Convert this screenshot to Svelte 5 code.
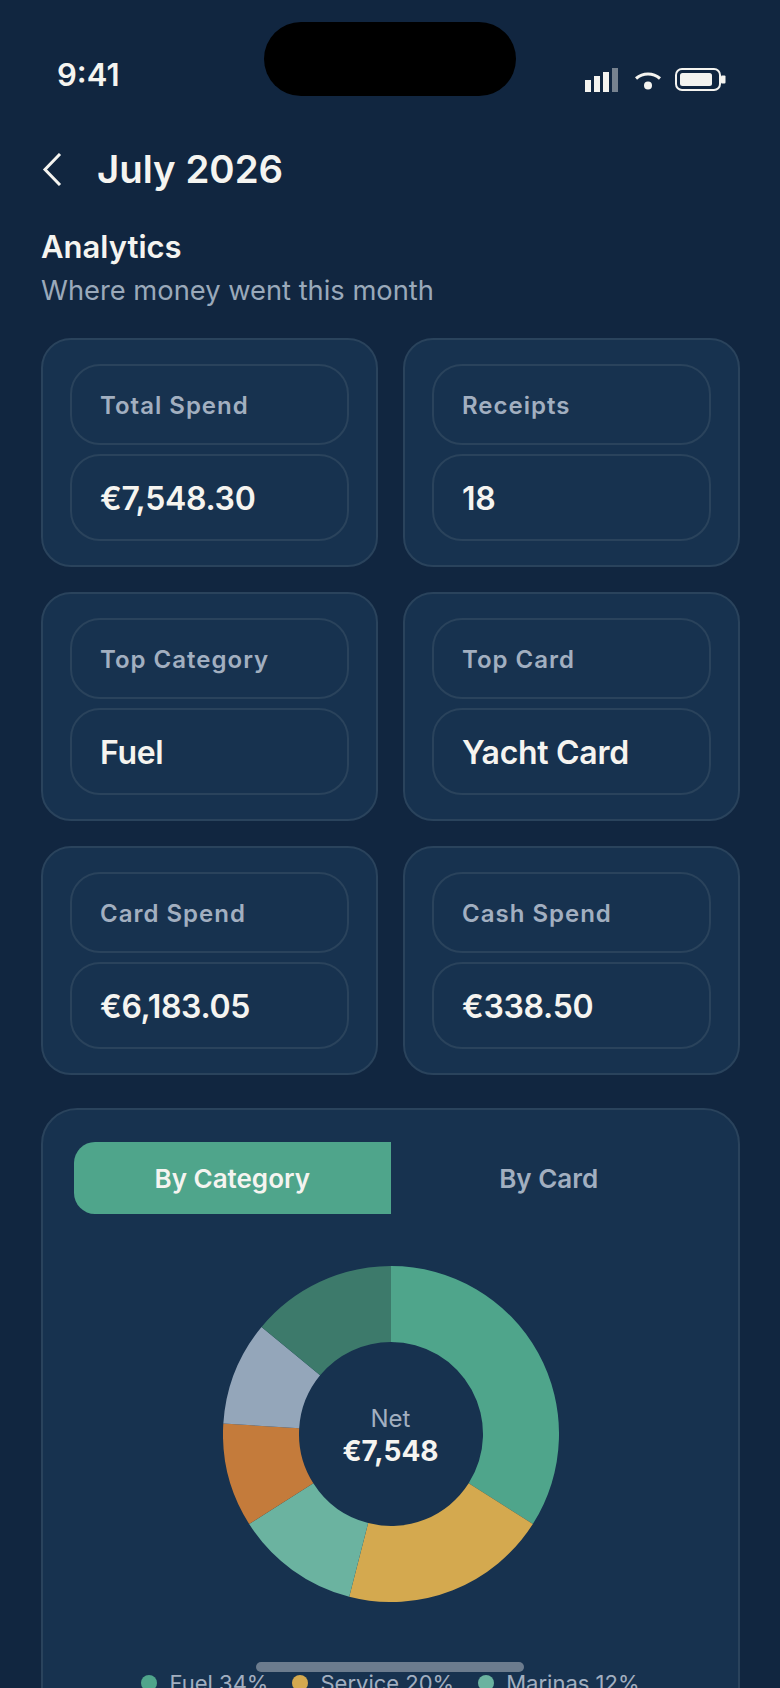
<script lang="ts">
	const stats = [
		{ label: 'Total Spend', value: '€7,548.30' },
		{ label: 'Receipts', value: '18' },
		{ label: 'Top Category', value: 'Fuel' },
		{ label: 'Top Card', value: 'Yacht Card' },
		{ label: 'Card Spend', value: '€6,183.05' },
		{ label: 'Cash Spend', value: '€338.50' }
	];

	const slices = [
		{ name: 'Fuel', pct: 34, color: '#4fa58b', legend: true },
		{ name: 'Service', pct: 20, color: '#d4a94f', legend: true },
		{ name: 'Marinas', pct: 12, color: '#6bb3a0', legend: true },
		{ name: 'Repairs', pct: 10, color: '#c47b3b', legend: false },
		{ name: 'Supplies', pct: 10, color: '#94a6ba', legend: false },
		{ name: 'Other', pct: 14, color: '#3d7a6b', legend: false }
	];

	const R = 168;
	const r = 92;

	function point(radius: number, pct: number) {
		const a = (pct / 100) * Math.PI * 2;
		return `${(R + radius * Math.sin(a)).toFixed(2)} ${(R - radius * Math.cos(a)).toFixed(2)}`;
	}

	let start = 0;
	const arcs = slices.map((s) => {
		const end = start + s.pct;
		const large = s.pct > 50 ? 1 : 0;
		const d = `M${point(R, start)} A${R} ${R} 0 ${large} 1 ${point(R, end)} L${point(r, end)} A${r} ${r} 0 ${large} 0 ${point(r, start)} Z`;
		start = end;
		return { d, color: s.color };
	});
</script>

<div class="screen">
	<div class="island"></div>

	<div class="status">
		<span class="time">9:41</span>
		<div class="status-icons">
			<svg width="34" height="24" viewBox="0 0 34 24" class="signal">
				<rect x="0" y="12" width="6" height="12" fill="#f5f4f0" />
				<rect x="9" y="8" width="6" height="16" fill="#f5f4f0" />
				<rect x="18" y="4" width="6" height="20" fill="#f5f4f0" />
				<rect x="27" y="0" width="6" height="24" fill="#f5f4f0" opacity="0.45" />
			</svg>
			<svg width="26" height="20" viewBox="0 0 26 20" class="wifi">
				<path d="M1 7.5 C8 1.5 18 1.5 25 7.5" fill="none" stroke="#f5f4f0" stroke-width="3.2" />
				<circle cx="13" cy="14.5" r="4" fill="#f5f4f0" />
			</svg>
			<svg width="51" height="23" viewBox="0 0 51 23" class="battery">
				<rect x="1" y="1" width="44" height="21" rx="6" fill="none" stroke="#f5f4f0" stroke-width="2" />
				<rect x="5" y="5" width="32" height="13" rx="2.5" fill="#f5f4f0" />
				<rect x="46" y="7.5" width="4.5" height="8" rx="1" fill="#f5f4f0" />
			</svg>
		</div>
	</div>

	<main class="content">
		<header class="top">
			<svg width="20" height="33" viewBox="0 0 20 33" class="back">
				<path d="M18 1 L3 16.5 L18 32" fill="none" stroke="#f5f4f0" stroke-width="3" />
			</svg>
			<h1>July 2026</h1>
		</header>

		<h2>Analytics</h2>
		<p class="sub">Where money went this month</p>

		<section class="grid">
			{#each stats as s}
				<div class="card">
					<div class="pill label">{s.label}</div>
					<div class="pill value">{s.value}</div>
				</div>
			{/each}
		</section>

		<section class="panel">
			<div class="tabs">
				<button class="tab active">By Category</button>
				<button class="tab">By Card</button>
			</div>

			<div class="donut">
				<svg width="336" height="336" viewBox="0 0 336 336">
					{#each arcs as a}
						<path d={a.d} fill={a.color} />
					{/each}
				</svg>
				<div class="center">
					<span class="net">Net</span>
					<strong>€7,548</strong>
				</div>
			</div>

			<div class="legend">
				{#each slices.filter((s) => s.legend) as s}
					<span class="item">
						<i style="background: {s.color}"></i>
						{s.name} {s.pct}%
					</span>
				{/each}
			</div>
		</section>
	</main>

	<div class="home"></div>
</div>

<style>
	:global(body) {
		margin: 0;
		background: #112640;
	}

	.screen {
		position: relative;
		width: 780px;
		height: 1688px;
		overflow: hidden;
		background: #112640;
		color: #f5f4f0;
		font-family: Inter, 'Liberation Sans', sans-serif;
	}

	.island {
		position: absolute;
		top: 22px;
		left: 264px;
		width: 252px;
		height: 74px;
		border-radius: 37px;
		background: #000;
	}

	.status {
		display: flex;
		justify-content: space-between;
		align-items: flex-start;
		height: 134px;
		padding: 0 54px 0 57px;
		box-sizing: border-box;
	}

	.time {
		margin-top: 57px;
		font-size: 31px;
		line-height: 36px;
		font-weight: 600;
	}

	.status-icons {
		display: flex;
		align-items: flex-start;
		margin-top: 68px;
	}

	.signal {
		margin-right: 16px;
	}

	.wifi {
		margin-right: 14px;
		margin-top: 3px;
	}

	.content {
		padding: 0 40px 0 41px;
	}

	.top {
		display: flex;
		align-items: center;
		gap: 35px;
		height: 70px;
		padding-left: 1px;
		box-sizing: border-box;
		margin-bottom: 24px;
	}

	.back {
		flex: none;
	}

	h1 {
		margin: 0;
		font-size: 38.4px;
		line-height: 46px;
		font-weight: 600;
	}

	h2 {
		margin: 0;
		font-size: 31px;
		line-height: 38px;
		font-weight: 600;
	}

	.sub {
		margin: 8px 0 30px;
		font-size: 27.3px;
		line-height: 34px;
		color: #9aa9ba;
	}

	.grid {
		display: grid;
		grid-template-columns: 1fr 1fr;
		gap: 25px;
	}

	.card {
		display: flex;
		flex-direction: column;
		gap: 9px;
		height: 229px;
		box-sizing: border-box;
		padding: 24px 27px;
		border: 2px solid #2a435c;
		border-radius: 30px;
		background: #17324f;
	}

	.pill {
		display: flex;
		align-items: center;
		box-sizing: border-box;
		padding: 1px 28px 0;
		border: 2px solid #2a435c;
		border-radius: 30px;
	}

	.label {
		height: 81px;
		font-size: 24px;
		font-weight: 600;
		letter-spacing: 1px;
		color: #a2afc0;
	}

	.value {
		height: 87px;
		font-size: 32px;
		font-weight: 600;
		letter-spacing: -0.3px;
	}

	.panel {
		margin-top: 33px;
		height: 700px;
		box-sizing: border-box;
		padding: 32px 31px;
		border: 2px solid #2a435c;
		border-radius: 36px;
		background: #17324f;
	}

	.tabs {
		display: grid;
		grid-template-columns: 1fr 1fr;
	}

	.tab {
		height: 72px;
		padding: 0;
		border: 0;
		background: none;
		font: inherit;
		font-size: 26px;
		font-weight: 600;
		color: #a2afc0;
	}

	.tab.active {
		border-radius: 21px 0 0 21px;
		background: #4fa58b;
		color: #f5f4f0;
	}

	.donut {
		position: relative;
		width: 336px;
		height: 336px;
		margin: 52px auto 0;
	}

	.donut svg {
		display: block;
	}

	.center {
		position: absolute;
		inset: 3px 0 0;
		display: flex;
		flex-direction: column;
		align-items: center;
		justify-content: center;
	}

	.net {
		font-size: 24px;
		line-height: 30px;
		color: #a2afc0;
	}

	.center strong {
		font-size: 28px;
		line-height: 34px;
		font-weight: 700;
	}

	.legend {
		display: flex;
		justify-content: center;
		gap: 24px;
		margin-top: 67px;
	}

	.item {
		display: flex;
		align-items: center;
		gap: 12px;
		font-size: 22px;
		line-height: 28px;
		color: #a2afc0;
	}

	.item i {
		width: 16px;
		height: 16px;
		border-radius: 50%;
	}

	.home {
		position: absolute;
		left: 256px;
		bottom: 16px;
		width: 268px;
		height: 10px;
		border-radius: 5px;
		background: #6c7c8e;
	}
</style>
